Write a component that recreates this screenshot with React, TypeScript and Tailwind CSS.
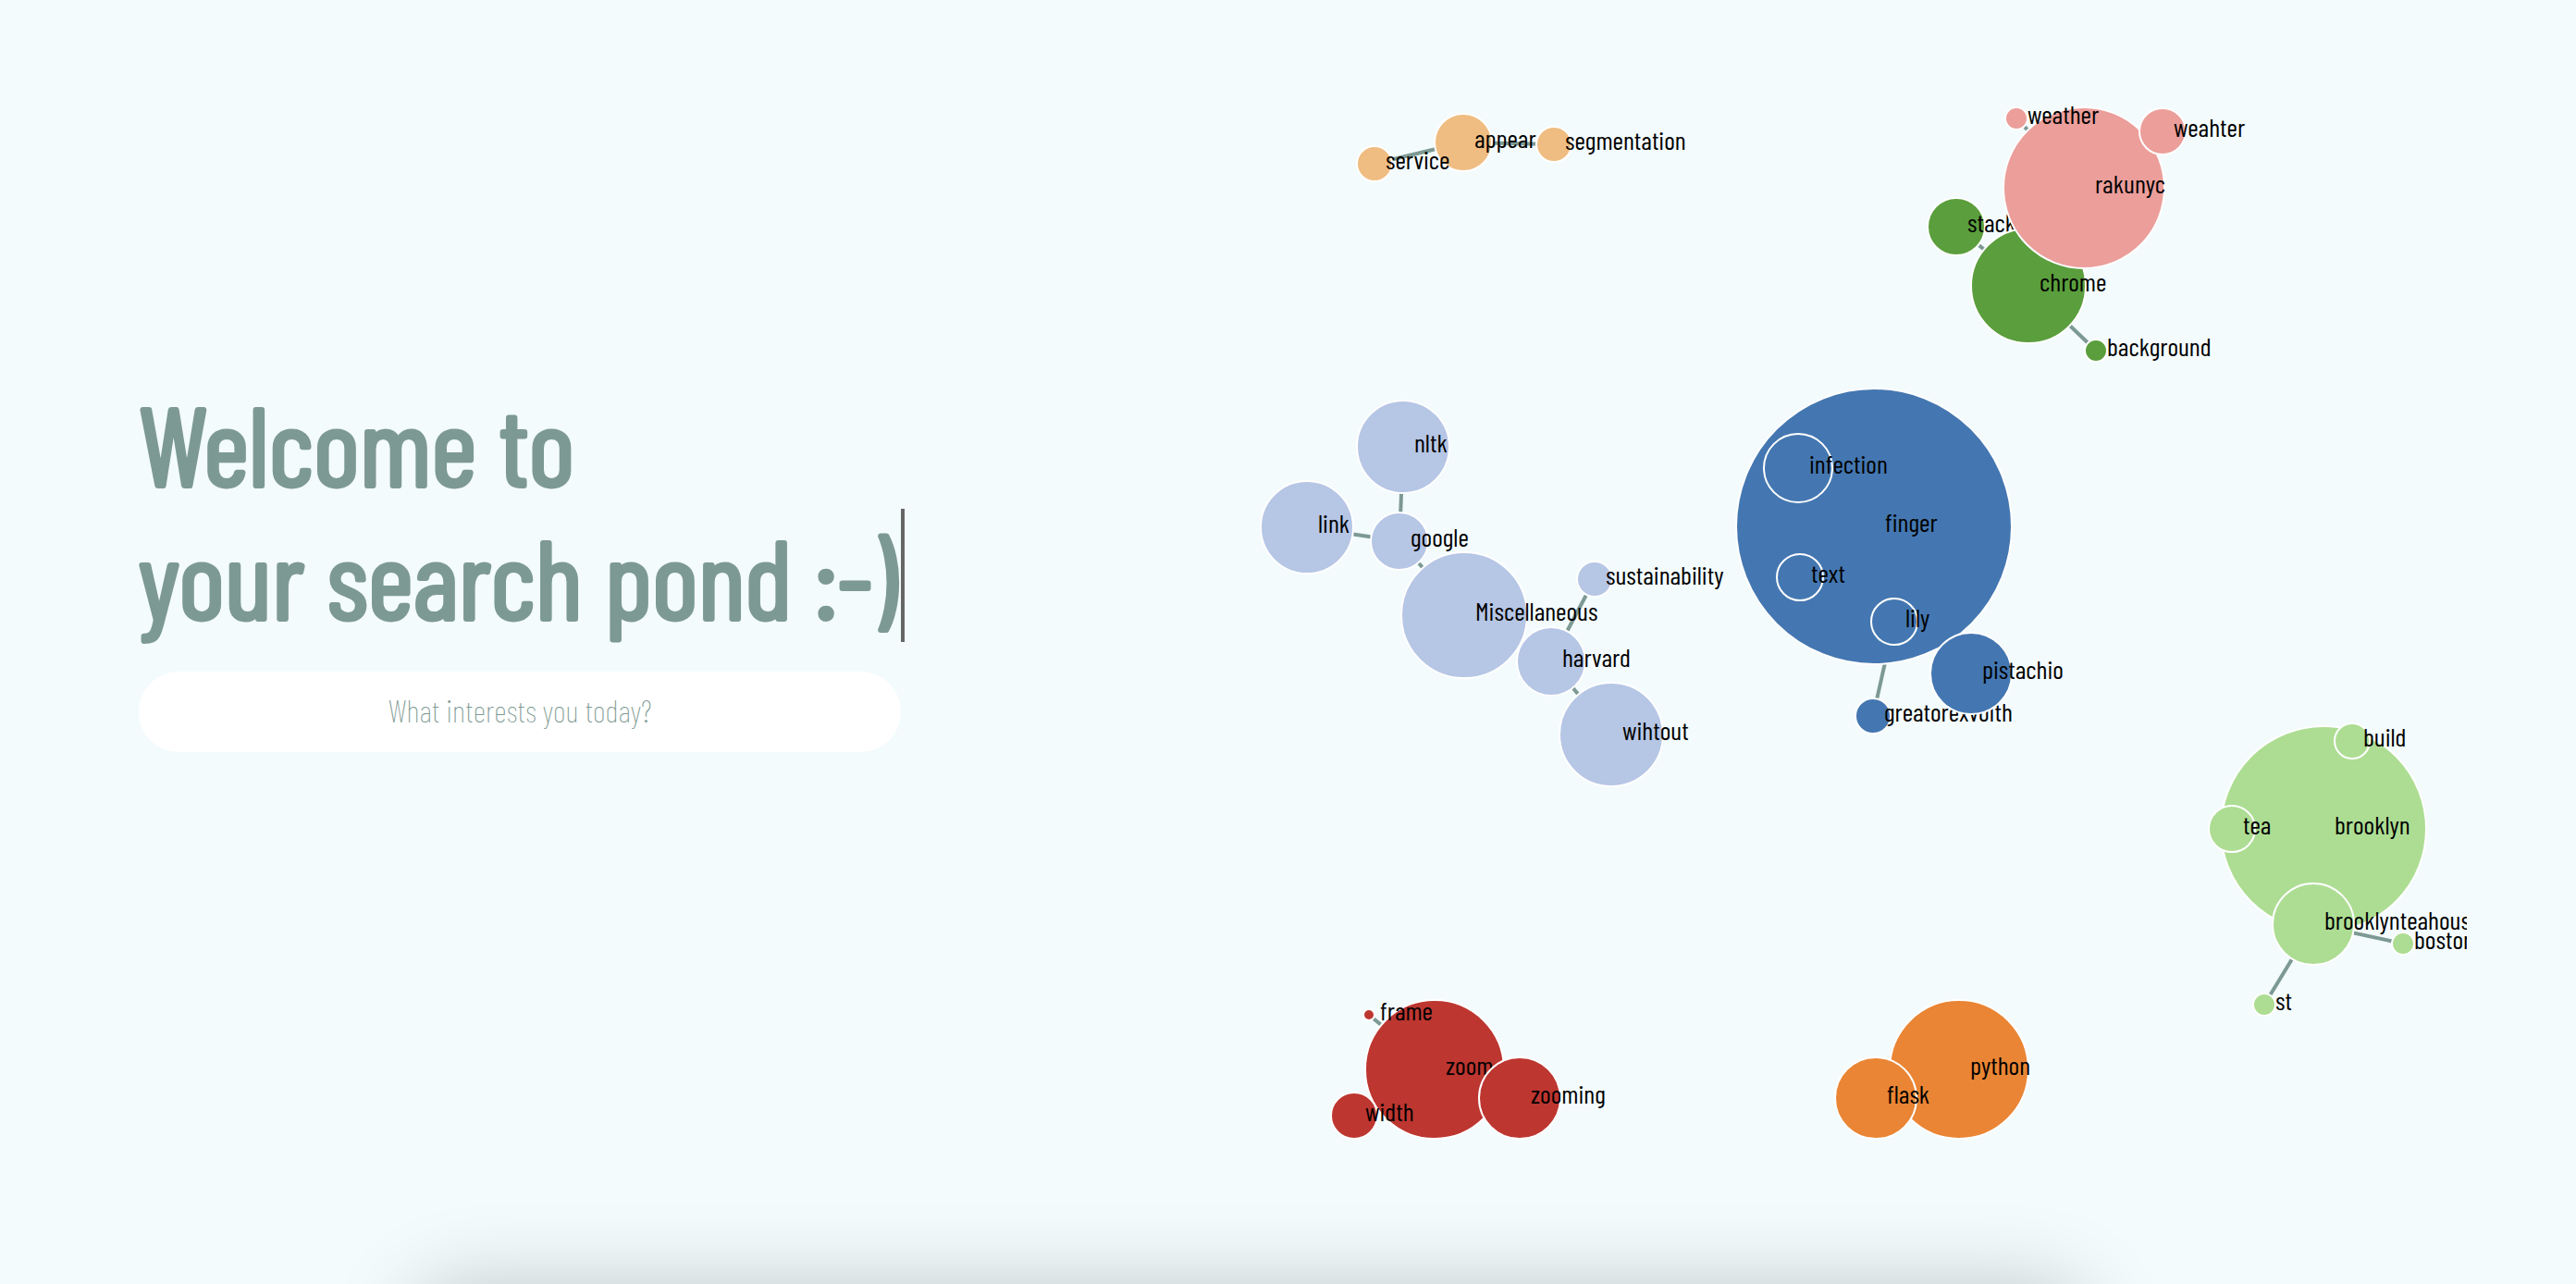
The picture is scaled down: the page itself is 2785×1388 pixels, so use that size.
type Node = { id: string; x: number; y: number; r: number; fill: string };

const PEACH = '#efbd82';
const PINK = '#eb9e9a';
const GREEN = '#5b9e3d';
const LAVENDER = '#b6c6e5';
const BLUE = '#4477b1';
const LIME = '#addd93';
const RED = '#bd3630';
const ORANGE = '#e98534';

// Listed in paint order: later nodes cover earlier ones.
const nodes: Node[] = [
  { id: 'appear', x: 1582, y: 154, r: 31, fill: PEACH },
  { id: 'service', x: 1486, y: 177, r: 19, fill: PEACH },
  { id: 'segmentation', x: 1680, y: 156, r: 19, fill: PEACH },
  { id: 'stack', x: 2115, y: 245, r: 31, fill: GREEN },
  { id: 'chrome', x: 2193, y: 309, r: 62, fill: GREEN },
  { id: 'background', x: 2266, y: 379, r: 12, fill: GREEN },
  { id: 'rakunyc', x: 2253, y: 203, r: 87, fill: PINK },
  { id: 'weather', x: 2180, y: 128, r: 12, fill: PINK },
  { id: 'weahter', x: 2338, y: 142, r: 25, fill: PINK },
  { id: 'nltk', x: 1517, y: 483, r: 50, fill: LAVENDER },
  { id: 'link', x: 1413, y: 570, r: 50, fill: LAVENDER },
  { id: 'google', x: 1513, y: 585, r: 31, fill: LAVENDER },
  { id: 'Miscellaneous', x: 1583, y: 665, r: 68, fill: LAVENDER },
  { id: 'harvard', x: 1677, y: 715, r: 37, fill: LAVENDER },
  { id: 'sustainability', x: 1724, y: 626, r: 19, fill: LAVENDER },
  { id: 'wihtout', x: 1742, y: 794, r: 56, fill: LAVENDER },
  { id: 'finger', x: 2026, y: 569, r: 149, fill: BLUE },
  { id: 'infection', x: 1944, y: 506, r: 37, fill: BLUE },
  { id: 'text', x: 1946, y: 624, r: 25, fill: BLUE },
  { id: 'lily', x: 2048, y: 672, r: 25, fill: BLUE },
  { id: 'greatorexvoith', x: 2025, y: 774, r: 19, fill: BLUE },
  { id: 'pistachio', x: 2131, y: 728, r: 44, fill: BLUE },
  { id: 'brooklyn', x: 2512, y: 896, r: 111, fill: LIME },
  { id: 'build', x: 2543, y: 801, r: 19, fill: LIME },
  { id: 'tea', x: 2413, y: 896, r: 25, fill: LIME },
  { id: 'brooklynteahouse', x: 2501, y: 999, r: 44, fill: LIME },
  { id: 'boston', x: 2598, y: 1020, r: 12, fill: LIME },
  { id: 'st', x: 2448, y: 1086, r: 12, fill: LIME },
  { id: 'zoom', x: 1551, y: 1156, r: 75, fill: RED },
  { id: 'frame', x: 1480, y: 1097, r: 6, fill: RED },
  { id: 'width', x: 1464, y: 1206, r: 25, fill: RED },
  { id: 'zooming', x: 1643, y: 1187, r: 44, fill: RED },
  { id: 'python', x: 2118, y: 1156, r: 75, fill: ORANGE },
  { id: 'flask', x: 2028, y: 1187, r: 44, fill: ORANGE },
];

const links: [string, string][] = [
  ['service', 'appear'],
  ['appear', 'segmentation'],
  ['weather', 'rakunyc'],
  ['weahter', 'rakunyc'],
  ['stack', 'chrome'],
  ['chrome', 'background'],
  ['nltk', 'google'],
  ['link', 'google'],
  ['google', 'Miscellaneous'],
  ['Miscellaneous', 'harvard'],
  ['harvard', 'sustainability'],
  ['harvard', 'wihtout'],
  ['lily', 'greatorexvoith'],
  ['brooklyn', 'brooklynteahouse'],
  ['brooklynteahouse', 'boston'],
  ['brooklynteahouse', 'st'],
  ['zoom', 'frame'],
  ['zoom', 'width'],
  ['zoom', 'zooming'],
  ['python', 'flask'],
];

const byId = new Map(nodes.map((n) => [n.id, n]));

function Pond() {
  return (
    <svg viewBox="1340 0 1327 1388" className="block h-auto w-full" role="img" aria-label="Search pond">
      <g stroke="#7d9993" strokeWidth="4">
        {links.map(([a, b]) => {
          const s = byId.get(a)!;
          const t = byId.get(b)!;
          return <line key={a + b} x1={s.x} y1={s.y} x2={t.x} y2={t.y} />;
        })}
      </g>
      {nodes.map((n) => (
        <g key={n.id}>
          <circle cx={n.x} cy={n.y} r={n.r} fill={n.fill} stroke="#fff" strokeWidth="2" />
          <text x={n.x + 12} y={n.y + 6} className="fill-black text-[28px]">
            {n.id}
          </text>
        </g>
      ))}
    </svg>
  );
}

export default function App() {
  return (
    <div className="relative overflow-hidden bg-[#f3fbfd] font-['Barlow_Condensed','Roboto_Condensed',sans-serif]">
      <main className="flex items-center pr-[118px] pl-[150px]">
        <section className="w-[828px] shrink-0 pb-[170px]">
          <h1 className="text-[120px] leading-[144px] font-normal text-[#7d9993] [-webkit-text-stroke:4px_#7d9993]">
            Welcome to
            <span className="block border-r-4 border-[#666] whitespace-nowrap">your search pond :-)</span>
          </h1>
          <input
            type="text"
            aria-label="Search"
            placeholder="What interests you today?"
            className="mt-8 block h-[87px] w-[824px] rounded-full bg-white pb-1 text-center text-[34px] font-extralight text-[#7d9993] outline-none placeholder:text-[#7d9993]"
          />
        </section>
        <div className="ml-auto w-[1327px] max-w-full min-w-0">
          <Pond />
        </div>
      </main>
      <div className="absolute top-full right-[19%] left-[16%] h-40 rounded-[50px] shadow-[0_4px_90px_rgba(0,0,0,0.22)]" />
    </div>
  );
}
